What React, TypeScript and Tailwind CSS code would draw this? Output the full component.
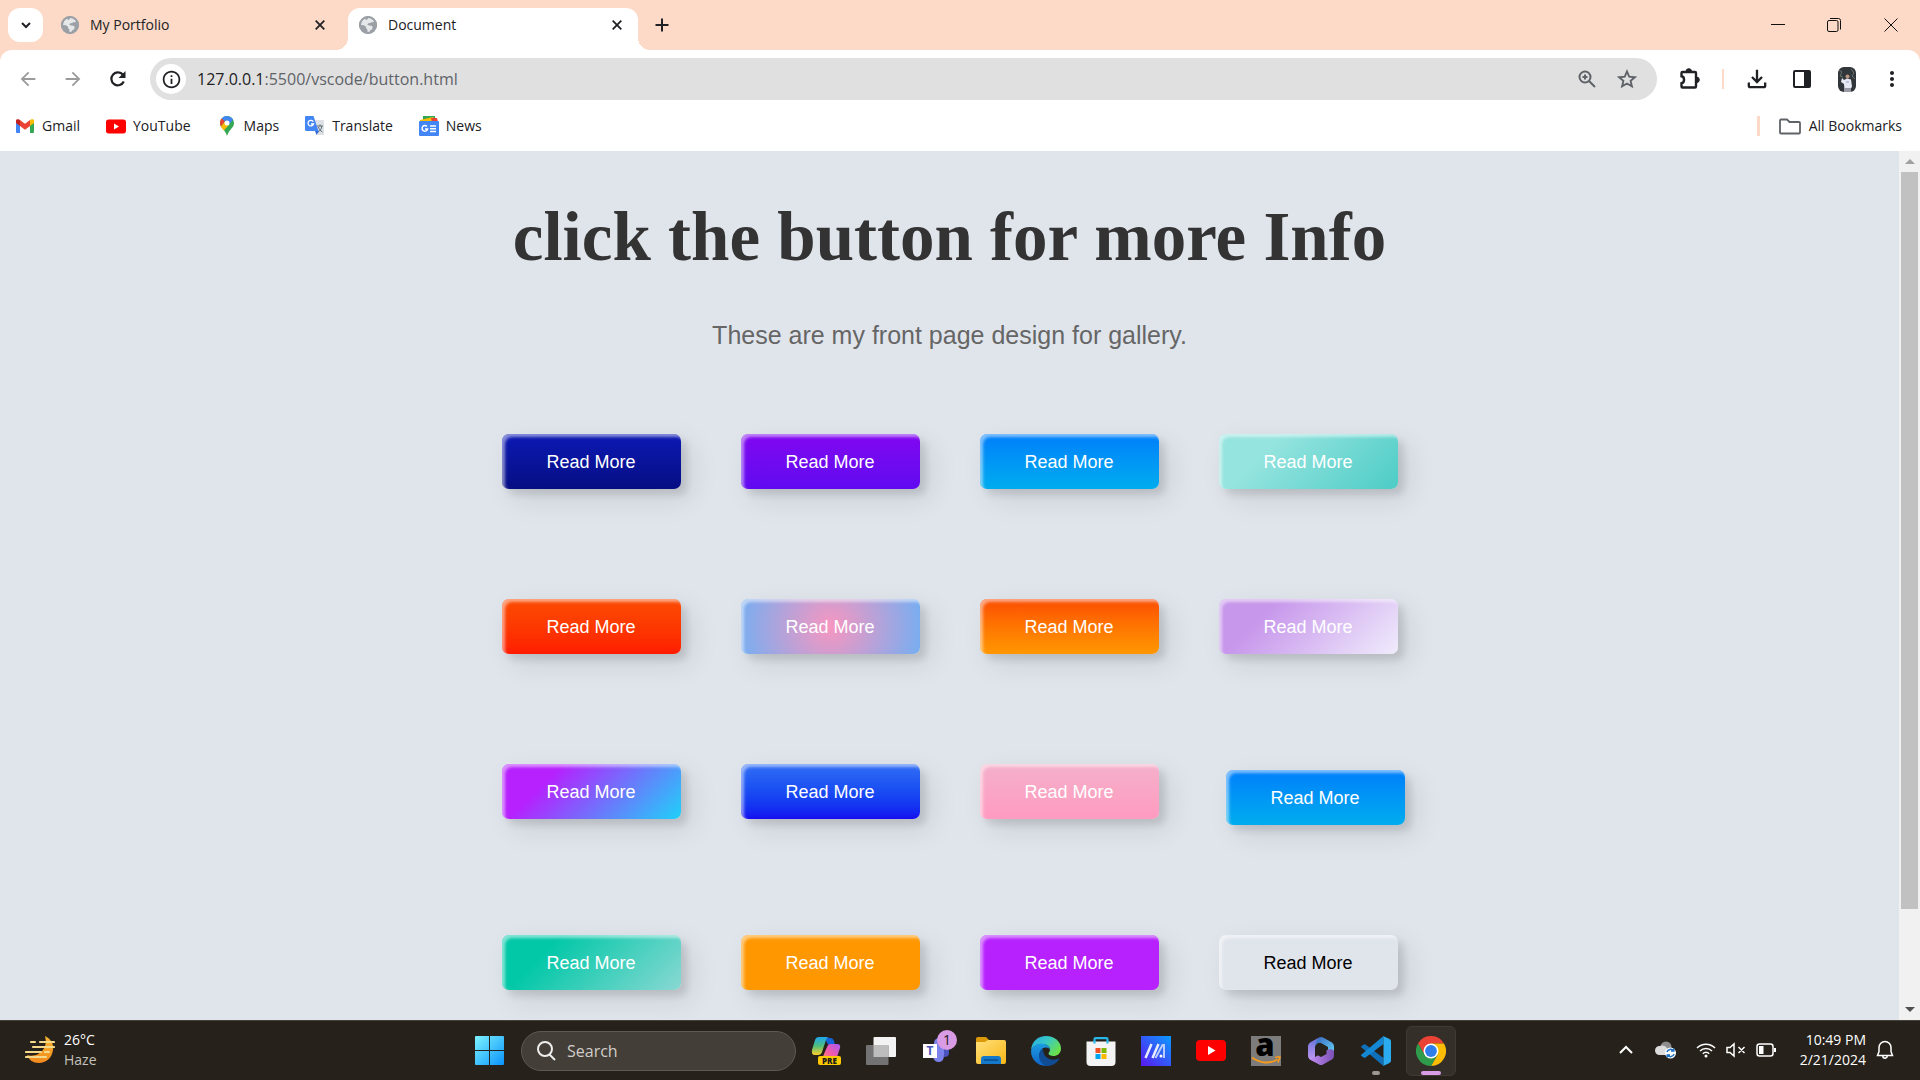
import type { ReactNode } from "react";
import {
  MdArrowBack,
  MdArrowForward,
  MdInfoOutline,
  MdOutlineFileDownload,
  MdMoreVert,
} from "react-icons/md";

/* ---------- browser icons ---------- */

function Globe() {
  return (
    <svg viewBox="0 0 18 18" className="size-[18px] shrink-0" aria-hidden="true">
      <circle cx="9" cy="9" r="9" fill="#9aa0a6" />
      <path d="M9.2 1.8c2.4-.3 5 1.2 6.1 3.4l-1.8 1.3-1.2-.6-.9 1.2-2.2.2-.9 1.5 1.9.8 2.4.1 1.1 1.4-.6 2.1-2.1 1.2-.5 1.7-1.9.4-.3-3-1.3-1.4-.1-1.5-2-1.4-3.1-.3C1.9 5.6 3.9 3.1 6.3 2.3l.5 1.6 1.6-.5z" fill="#fff" opacity=".75" />
      <circle cx="9" cy="9" r="8" fill="none" stroke="#9aa0a6" strokeWidth="2" />
    </svg>
  );
}

function Chevron({ up = false, className = "" }: { up?: boolean; className?: string }) {
  return (
    <svg viewBox="0 0 14 14" className={className} fill="none" stroke="currentColor" strokeWidth="2" aria-hidden="true">
      <path d={up ? "M1 10l6-6 6 6" : "M3 5l4 4 4-4"} />
    </svg>
  );
}

function Reload() {
  return (
    <svg viewBox="0 0 20 20" className="size-5" aria-hidden="true">
      <path d="M15.800 12.500A6.500 6.500 0 1 1 15 5.800" fill="none" stroke="#202124" strokeWidth="2.200" />
      <path d="M17.500 2v7h-7z" fill="#202124" />
    </svg>
  );
}

function Magnifier() {
  return (
    <svg viewBox="0 0 20 20" className="size-5" fill="none" stroke="#5f6368" strokeWidth="2" aria-hidden="true">
      <circle cx="8" cy="8" r="5.500" />
      <path d="M12 12l6 6M8 5.500v5M5.500 8h5" />
    </svg>
  );
}

function Star() {
  return (
    <svg viewBox="0 0 20 20" className="size-5" fill="none" stroke="#5f6368" strokeWidth="1.900" aria-hidden="true">
      <path d="M10 2.500l2.200 5.200 5.700.5-4.300 3.700 1.300 5.500-4.900-2.900-4.900 2.900 1.300-5.500L2.100 8.200l5.700-.5z" />
    </svg>
  );
}

function Puzzle() {
  return (
    <svg viewBox="0 0 24 24" className="size-6" aria-hidden="true">
      <path d="M4.500 5H17a1 1 0 0 1 1 1v13.500a1 1 0 0 1-1 1H4.500a1 1 0 0 1-1-1v-3.300c3.400-.4 3.400-6.500 0-6.900V6a1 1 0 0 1 1-1z" fill="none" stroke="#202124" strokeWidth="2.400" />
      <path d="M8 4.500a2.800 2.800 0 0 1 5.600 0zM18.500 10a2.800 2.800 0 0 1 0 5.600z" fill="#202124" stroke="#202124" />
    </svg>
  );
}

function SidePanel() {
  return (
    <svg viewBox="0 0 20 20" className="size-5" aria-hidden="true">
      <rect x="2" y="2" width="16" height="16" rx="1" fill="none" stroke="#202124" strokeWidth="2" />
      <path d="M12 2h6v16h-6z" fill="#202124" />
    </svg>
  );
}

function Avatar() {
  return (
    <svg viewBox="0 0 18 25" className="h-[25px] w-[18px]" aria-hidden="true">
      <rect width="18" height="25" rx="6" fill="#30363a" />
      <path d="M1 3l3 2-2 4 3 1M13 2l3 4-2 3 3 3" stroke="#68746f" fill="none" />
      <circle cx="9.500" cy="9.500" r="2" fill="#b99580" />
      <path d="M4 11l2 2 3-1.500 4 1 1 7-1.500 3H6.500L6 17l-3-2z" fill="#e6e8f2" />
      <path d="M8 15h3" stroke="#8da2cf" />
      <path d="M6 21h7v4H6z" fill="#9a9aa6" />
    </svg>
  );
}

function Folder() {
  return (
    <svg viewBox="0 0 22 17" className="h-[17px] w-[22px]" fill="none" stroke="#5f6368" strokeWidth="1.800" aria-hidden="true">
      <path d="M2 1.500h6L10.500 4H20a1 1 0 0 1 1 1v9.500a1 1 0 0 1-1 1H2a1 1 0 0 1-1-1v-12a1 1 0 0 1 1-1z" />
    </svg>
  );
}

function Gmail() {
  return (
    <svg viewBox="0 0 18 14" className="h-[14px] w-[18px]" aria-hidden="true">
      <path d="M0 1.500V13q0 1 1 1h3V6z" fill="#4285f4" />
      <path d="M18 1.500V13q0 1-1 1h-3V6z" fill="#34a853" />
      <path d="M14 1v6l4-3V1.800C18 0 16 0 15 .5z" fill="#fbbc04" />
      <path d="M4 1v6l5 3.800L14 7V1L9 4.800z" fill="#ea4335" />
      <path d="M0 4l4 3V1L3 .5C2 0 0 0 0 1.800z" fill="#c5221f" />
    </svg>
  );
}

function YouTube({ className }: { className: string }) {
  return (
    <svg viewBox="0 0 30 21" className={className} aria-hidden="true">
      <rect width="30" height="21" rx="4" fill="#f00" />
      <path d="M12 6l7.500 4.500L12 15z" fill="#fff" />
    </svg>
  );
}

function MapPin() {
  return (
    <svg viewBox="0 0 14 20" className="h-5 w-[14px]" aria-hidden="true">
      <path d="M7 0a7 7 0 0 1 7 7c0 5-5 6-7 13C5 13 0 12 0 7a7 7 0 0 1 7-7z" fill="#34a853" />
      <path d="M1.700 2.500A7 7 0 0 1 9.100.4L4.800 5.500z" fill="#4285f4" />
      <path d="M1.700 2.500l3.300 3L.9 10.500C-.4 8-.4 5 1.700 2.500z" fill="#ea4335" />
      <path d="M9.100.4a7 7 0 0 1 4 3.200L8.700 9 5 5.500z" fill="#4285f4" />
      <path d="M.9 10.500L5 5.500 9 8.700 4 14.600C2.800 13 1.500 12 .9 10.500z" fill="#fbbc04" />
      <circle cx="7" cy="7" r="2.500" fill="#fff" />
    </svg>
  );
}

function Translate() {
  return (
    <svg viewBox="0 0 20 20" className="size-5" aria-hidden="true">
      <path d="M8 4h10q1 0 1 1v13q0 1-1 1h-6z" fill="#dde1e6" />
      <path d="M12 10h6M15 8.500V10M13 16c2-1 3.500-3 3.800-6M13.500 11c.5 2 2 4 4 5" stroke="#5f6b75" fill="none" />
      <path d="M10 15h4l-2.500 4z" fill="#3367d6" />
      <path d="M1 0h7.500l5 15h-12Q0 15 0 13.500V1q0-1 1-1z" fill="#4285f4" />
      <path d="M8.300 5.800A2.800 2.800 0 1 0 8.500 8H6" stroke="#fff" strokeWidth="1.300" fill="none" />
    </svg>
  );
}

function News() {
  return (
    <svg viewBox="0 0 20 20" className="size-5" aria-hidden="true">
      <path d="M4 0h12v4H4z" fill="#34a853" />
      <path d="M1 4l13-3 2 4H1z" fill="#fbbc04" />
      <path d="M12 2h6l1 4h-6z" fill="#ea4335" />
      <rect y="5" width="20" height="15" rx="1" fill="#4285f4" />
      <path d="M8 10.500a2.800 2.800 0 1 0 .6 2.500H6M11 10h6M11 12.800h6M11 15.600h6" stroke="#fff" strokeWidth="1.500" fill="none" />
    </svg>
  );
}

/* ---------- taskbar icons ---------- */

function Windows() {
  return (
    <svg viewBox="0 0 29 29" className="size-[29px]" aria-hidden="true">
      <defs>
        <linearGradient id="win" x1="0" y1="0" x2="1" y2="1">
          <stop stopColor="#7df3ff" />
          <stop offset="1" stopColor="#0a93fb" />
        </linearGradient>
      </defs>
      <path d="M0 1q0-1 1-1h13v14H0zM15 0h13q1 0 1 1v13H15zM0 15h14v14H1q-1 0-1-1zM15 15h14v13q0 1-1 1H15z" fill="url(#win)" />
    </svg>
  );
}

function Copilot() {
  return (
    <svg viewBox="0 0 30 30" className="size-[30px] overflow-visible" aria-hidden="true">
      <defs>
        <linearGradient id="cpA" x1="0" y1="0" x2="0" y2="1">
          <stop stopColor="#1ea7f0" />
          <stop offset=".5" stopColor="#4fbf7a" />
          <stop offset="1" stopColor="#ffd02a" />
        </linearGradient>
        <linearGradient id="cpB" x1="1" y1="0" x2="0" y2="1">
          <stop stopColor="#a55af5" />
          <stop offset=".5" stopColor="#f45aa8" />
          <stop offset="1" stopColor="#ff9a4a" />
        </linearGradient>
      </defs>
      <path d="M14 2h6q2 0 3 3l1 4h-5q-2 0-3-2z" fill="#1463d8" />
      <path d="M8 1h10q-2 0-3 3l-4 12q-1 3-4 3H4q-4 0-3-5L4 4q1-3 4-3z" fill="url(#cpA)" />
      <path d="M19 8h7q4 0 3 4l-3 9q-1 4-5 4h-9q-4 0-4-4 4 1 5-3l3-7q1-3 3-3z" fill="url(#cpB)" />
      <rect x="7" y="20" width="23" height="9" rx="2" fill="#ffc900" />
      <text x="18.500" y="27.500" textAnchor="middle" fontFamily="Open Sans, sans-serif" fontWeight="800" fontSize="8" fill="#1b1b1b">PRE</text>
    </svg>
  );
}

function TaskView() {
  return (
    <svg viewBox="0 0 30 28" className="h-7 w-[30px]" aria-hidden="true">
      <rect x="7.500" width="22.500" height="20" rx="1" fill="#f3f3f3" />
      <rect y="8" width="22.500" height="20" rx="1" fill="#737373" />
      <path d="M7.500 8h15v12h-15z" fill="#bdbdbd" />
    </svg>
  );
}

function Teams() {
  return (
    <svg viewBox="0 0 34 34" className="size-[34px] overflow-visible" aria-hidden="true">
      <circle cx="16" cy="13" r="5" fill="#7b83eb" />
      <path d="M18 16h8v7q0 4-5 4z" fill="#4b53bc" />
      <path d="M10 16h11v9q0 7-5 7t-6-5z" fill="#7b83eb" />
      <rect y="14" width="14" height="14" fill="#fff" />
      <text x="7" y="25" textAnchor="middle" fontFamily="Open Sans, sans-serif" fontWeight="700" fontSize="12" fill="#4b53bc">T</text>
      <circle cx="24" cy="10" r="10" fill="#d99be3" />
      <text x="24" y="15" textAnchor="middle" fontFamily="Open Sans, sans-serif" fontSize="14" fill="#1b1b1b">1</text>
    </svg>
  );
}

function Explorer() {
  return (
    <svg viewBox="0 0 30 27" className="h-[27px] w-[30px]" aria-hidden="true">
      <defs>
        <linearGradient id="fold" x1="0" y1="0" x2="1" y2="1">
          <stop stopColor="#ffe07a" />
          <stop offset="1" stopColor="#f9b717" />
        </linearGradient>
      </defs>
      <path d="M0 2q0-2 2-2h8l3 3v6H0z" fill="#dc9a0a" />
      <path d="M0 5h9l3-2h16q2 0 2 2v20q0 2-2 2H2q-2 0-2-2z" fill="url(#fold)" />
      <path d="M5 27v-5q0-3 3-3h14q3 0 3 3v5z" fill="#1578c8" />
      <path d="M8 23h14" stroke="#0a4f94" strokeWidth="1.500" />
    </svg>
  );
}

function Edge() {
  return (
    <svg viewBox="0 0 30 30" className="size-[30px]" aria-hidden="true">
      <defs>
        <linearGradient id="edA" x1="0" y1="0" x2="1" y2=".6">
          <stop stopColor="#27a8e8" />
          <stop offset=".5" stopColor="#38c8c6" />
          <stop offset="1" stopColor="#6be04a" />
        </linearGradient>
        <linearGradient id="edB" x1="0" y1="0" x2="0" y2="1">
          <stop stopColor="#1b9de2" />
          <stop offset="1" stopColor="#1263c6" />
        </linearGradient>
      </defs>
      <path d="M0 14C1 5 7 0 15 0c9 0 15 6 15 12.500 0 5-4 7.500-7.500 7.500-3 0-5-1-5-2.500 0-1 1.500-1.500 1.500-4C19 10 15 8 11 8 6 8 2 10.500 0 14z" fill="url(#edA)" />
      <path d="M0 15C1 10.500 5 7.500 10 7.500c5 0 9 3 9 6-1-1.500-3-2-4.500-2-3 0-6 3.500-6 8 0 5 4 9 9 10C8 31.500 0 24 0 15z" fill="url(#edB)" />
      <path d="M12 13c-3 1.500-4 4-4 7 0 5 4 9.500 9 10 5-.3 8.500-3 11-6.500.4-.7 0-1.200-.8-.8C20 25.500 12 22 12 13z" fill="#0f4c94" />
    </svg>
  );
}

function Store() {
  return (
    <svg viewBox="0 0 30 30" className="size-[30px]" aria-hidden="true">
      <path d="M8.500 8V3.200q0-1 1-1h11q1 0 1 1V8" fill="none" stroke="#29b6e8" strokeWidth="2.200" />
      <path d="M.5 5.500h29V26q0 4-4 4h-21q-4 0-4-4z" fill="#f4f4f4" />
      <path d="M8.500 5v2.500M21.500 5v2.500" stroke="#29b6e8" strokeWidth="2.200" />
      <path d="M9.500 12h5v5h-5z" fill="#f25022" />
      <path d="M15.500 12h5v5h-5z" fill="#7fba00" />
      <path d="M9.500 18h5v5h-5z" fill="#00a4ef" />
      <path d="M15.500 18h5v5h-5z" fill="#ffb900" />
    </svg>
  );
}

function MyAsus() {
  return (
    <svg viewBox="0 0 30 30" className="size-[30px]" aria-hidden="true">
      <defs>
        <linearGradient id="asus" x1="0" y1="1" x2="1" y2="0">
          <stop stopColor="#5a17f0" />
          <stop offset="1" stopColor="#0b9bff" />
        </linearGradient>
      </defs>
      <path d="M0 0h30v30H0z" fill="url(#asus)" />
      <path d="M10.500 8L4.500 22M17.500 8l-6 14" stroke="#e7ecff" strokeWidth="2.500" />
      <path d="M14.500 22l7-13H23v13" fill="none" stroke="#b8ccff" strokeWidth="2" />
      <circle cx="20" cy="20" r="1.500" fill="#fff" />
    </svg>
  );
}

function Amazon() {
  return (
    <svg viewBox="0 0 30 30" className="size-[30px] overflow-visible" aria-hidden="true">
      <path d="M0 0h30v30H0z" fill="#7c7c7c" />
      <text x="14" y="20" textAnchor="middle" fontFamily="Open Sans, sans-serif" fontWeight="800" fontSize="31" fill="#000">a</text>
      <path d="M1 21.500c8 6 18 6.500 25.500 2" fill="none" stroke="#f79a1c" strokeWidth="2" />
      <path d="M24 21.500q6-1.500 5 0t-2 5" fill="none" stroke="#f79a1c" strokeWidth="1.500" />
    </svg>
  );
}

function M365() {
  return (
    <svg viewBox="0 0 30 30" className="size-[30px]" aria-hidden="true">
      <defs>
        <linearGradient id="mA" x1="0" y1="0" x2="0" y2="1">
          <stop stopColor="#6a74dc" />
          <stop offset="1" stopColor="#c79af0" />
        </linearGradient>
        <linearGradient id="mB" x1="0" y1="0" x2="1" y2="1">
          <stop stopColor="#3b62c0" />
          <stop offset="1" stopColor="#63d6f4" />
        </linearGradient>
        <linearGradient id="mC" x1="0" y1="0" x2="1" y2="0">
          <stop stopColor="#c490f2" />
          <stop offset="1" stopColor="#7a4fb4" />
        </linearGradient>
      </defs>
      <path d="M13 1.500L4 6.500Q2 8 2 10v10q0 2 2 3.500L9 26v-5V10z" fill="url(#mA)" />
      <path d="M13 1.500q2-1 4 0l9 5q2 1.500 2 3.500v8l-6-2v-5L15 7q-4-1-6 4 0-6 4-9.500z" fill="url(#mB)" />
      <path d="M3 22q3 1.500 6-1l13-7.500q5-1 6 1.500v5q0 2-2 3.500l-9 5q-2 1-4 0L4 23.500z" fill="url(#mC)" />
      <path d="M15 9l5.500 3v6L15 21l-5.500-3v-6z" fill="#26221b" />
    </svg>
  );
}

function VsCode() {
  return (
    <svg viewBox="0 0 30 30" className="size-[30px]" aria-hidden="true">
      <path d="M0 10.500l2.500-2q1-.5 2 0L22.500 22v8L.5 11.500q-.8-.5-.5-1z" fill="#0f6fb8" />
      <path d="M0 19.500l2.500 2q1 .5 2 0L22.500 8V0L.5 18.500q-.8.5-.5 1z" fill="#1488d4" />
      <path d="M22 0l6.500 3q1.500.8 1.500 2.500v19q0 1.700-1.500 2.500L22 30q.5-.5.5-1.500v-27Q22.500.500 22 0z" fill="#2cacf0" />
    </svg>
  );
}

function Chrome() {
  return (
    <svg viewBox="0 0 30 30" className="size-[30px]" aria-hidden="true">
      <path d="M2 7.500a15 15 0 0 1 26 0H15l-6.500 11.300z" fill="#ea4335" />
      <path d="M28 7.500A15 15 0 0 1 15 30l6.500-11.200L15 7.500z" fill="#fbbc04" />
      <path d="M2 7.500A15 15 0 0 0 15 30l6.500-11.200h-13z" fill="#2f9c4c" />
      <circle cx="15" cy="15" r="7.500" fill="#fff" />
      <circle cx="15" cy="15" r="5.900" fill="#2f7de9" />
    </svg>
  );
}

function Haze() {
  return (
    <svg viewBox="0 0 30 28" className="h-7 w-[30px]" aria-hidden="true">
      <defs>
        <linearGradient id="moon" x1="0" y1="0" x2="0" y2="1">
          <stop stopColor="#f7b733" />
          <stop offset="1" stopColor="#f28a1c" />
        </linearGradient>
      </defs>
      <path d="M20 0c6 3 9 8 8 14-1 8-7 13-14 13-6 0-10-3-12-8 9 3 22-4 18-19z" fill="url(#moon)" />
      <path d="M6 6h4M15 6h14M8 11h21M1 16h15M20 16h4M1 21h20" stroke="#f5d98b" strokeWidth="2.200" strokeLinecap="round" />
    </svg>
  );
}

function Cloud() {
  return (
    <svg viewBox="0 0 22 18" className="h-[18px] w-[22px]" aria-hidden="true">
      <circle cx="11" cy="6" r="5.500" fill="#8d8d8d" />
      <path d="M4.500 14a4.500 4.500 0 0 1 0-9 6 6 0 0 1 8 3l5 6z" fill="#dcdcdc" />
      <circle cx="15.500" cy="12" r="5.500" fill="#fff" />
      <path d="M12 11a3.600 3.600 0 0 1 6.500-1M19 13a3.600 3.600 0 0 1-6.500 1M18.800 7.500V10H16M12.200 16.500V14H15" stroke="#1b6fc4" strokeWidth="1.500" fill="none" />
    </svg>
  );
}

function Wifi() {
  return (
    <svg viewBox="0 0 20 16" className="h-4 w-5" fill="none" stroke="#fff" strokeWidth="1.500" aria-hidden="true">
      <path d="M1 6a12.500 12.500 0 0 1 18 0M4 9a8.500 8.500 0 0 1 12 0M6.800 11.700a4.500 4.500 0 0 1 6.400 0" />
      <circle cx="10" cy="14" r="1.500" fill="#fff" stroke="none" />
    </svg>
  );
}

function Muted() {
  return (
    <svg viewBox="0 0 20 16" className="h-4 w-5" fill="none" stroke="#fff" strokeWidth="1.500" aria-hidden="true">
      <path d="M1 5.500v5h3l4 3.500V2L4 5.500zM12.500 5l6 6M18.500 5l-6 6" />
    </svg>
  );
}

function Battery() {
  return (
    <svg viewBox="0 0 20 14" className="h-[14px] w-5" fill="none" stroke="#fff" strokeWidth="1.500" aria-hidden="true">
      <rect x="1" y="1" width="16" height="12" rx="2.500" />
      <path d="M3 3h4.500v8H3z" fill="#fff" stroke="none" />
      <path d="M19 5v4" strokeWidth="2" />
    </svg>
  );
}

function Bell() {
  return (
    <svg viewBox="0 0 18 20" className="h-5 w-[18px]" fill="none" stroke="#fff" strokeWidth="1.500" aria-hidden="true">
      <path d="M9 1.500a6 6 0 0 1 6 6v4l1.500 4h-15l1.500-4v-4a6 6 0 0 1 6-6zM6.800 16a2.200 2.200 0 0 0 4.400 0" />
    </svg>
  );
}

/* ---------- browser chrome ---------- */

function TabClose({ label }: { label: string }) {
  return (
    <button type="button" aria-label={label} className="flex size-5 items-center justify-center">
      <svg viewBox="0 0 10 10" className="size-[10px]" stroke="#202124" strokeWidth="1.800" aria-hidden="true">
        <path d="M.7.7l8.600 8.600M9.300.7L.7 9.300" />
      </svg>
    </button>
  );
}

function TabStrip() {
  return (
    <header className="flex h-[50px] shrink-0 items-end bg-[#fddac8]">
      <button type="button" aria-label="Search tabs" className="mb-2 ml-2 flex h-[34px] w-[35px] items-center justify-center rounded-xl bg-white">
        <Chevron className="size-[14px] text-[#202124]" />
      </button>
      <div className="flex h-[42px] w-[305px] items-center px-[18px] pb-2">
        <Globe />
        <span className="ml-[11px] flex-1 text-sm text-[#202124]">My Portfolio</span>
        <TabClose label="Close My Portfolio" />
      </div>
      <div className="relative flex h-[42px] w-[290px] items-center rounded-t-[12px] bg-white px-[11px] pb-2 before:absolute before:-left-3 before:bottom-0 before:size-3 before:bg-[radial-gradient(circle_at_0_0,transparent_12px,white_12px)] after:absolute after:-right-3 after:bottom-0 after:size-3 after:bg-[radial-gradient(circle_at_100%_0,transparent_12px,white_12px)]">
        <Globe />
        <span className="ml-[11px] flex-1 text-sm text-[#202124]">Document</span>
        <TabClose label="Close Document" />
      </div>
      <button type="button" aria-label="New tab" className="mb-2 ml-[14px] flex h-[34px] w-5 items-center justify-center">
        <svg viewBox="0 0 14 14" className="size-[14px]" stroke="#202124" strokeWidth="2" aria-hidden="true">
          <path d="M7 .5v13M.5 7h13" />
        </svg>
      </button>
      <div className="ml-auto flex h-full items-center">
        <button type="button" aria-label="Minimize" className="flex h-full w-14 items-center justify-center">
          <svg viewBox="0 0 14 14" className="size-[14px]" stroke="#111" aria-hidden="true"><path d="M0 6.500h14" /></svg>
        </button>
        <button type="button" aria-label="Restore" className="flex h-full w-14 items-center justify-center">
          <svg viewBox="0 0 14 14" className="size-[14px]" stroke="#111" fill="none" aria-hidden="true">
            <rect x=".5" y="2.500" width="10.500" height="11" rx="1.500" />
            <path d="M3 .5h8.500q2 0 2 2v9" />
          </svg>
        </button>
        <button type="button" aria-label="Close" className="flex h-full w-[58px] items-center justify-center">
          <svg viewBox="0 0 14 14" className="size-[14px]" stroke="#111" aria-hidden="true"><path d="M.5.5l13 13M13.500.5l-13 13" /></svg>
        </button>
      </div>
    </header>
  );
}

function ToolButton({ label, children }: { label: string; children: ReactNode }) {
  return (
    <button type="button" aria-label={label} className="flex h-10 w-[45px] shrink-0 items-center justify-center text-[#202124]">
      {children}
    </button>
  );
}

function Toolbar() {
  return (
    <div className="bg-[#fddac8]">
      <div className="flex h-[58px] items-center rounded-t-[12px] bg-white pr-[6px] pl-[5px]">
        <ToolButton label="Back"><MdArrowBack className="size-[22px] text-[#9b9b9b]" /></ToolButton>
        <ToolButton label="Forward"><MdArrowForward className="size-[22px] text-[#9b9b9b]" /></ToolButton>
        <ToolButton label="Reload"><Reload /></ToolButton>
        <div className="mx-[10px] flex h-[42px] flex-1 items-center rounded-full bg-[#e0e0e0] pr-3 pl-[6px]">
          <button type="button" aria-label="Site information" className="flex size-[30px] items-center justify-center rounded-full bg-white text-[#202124]">
            <MdInfoOutline className="size-[21px]" />
          </button>
          <a href="#page" className="ml-[11px] flex-1 text-base text-[#5f6368]">
            <span className="text-[#202124]">127.0.0.1</span>:5500/vscode/button.html
          </a>
          <button type="button" aria-label="Zoom" className="mr-5"><Magnifier /></button>
          <button type="button" aria-label="Bookmark this page" className="mr-2"><Star /></button>
        </div>
        <ToolButton label="Extensions"><Puzzle /></ToolButton>
        <span className="mx-[10px] h-5 w-[2px] bg-[#fddac8]" />
        <ToolButton label="Downloads"><MdOutlineFileDownload className="size-7" /></ToolButton>
        <ToolButton label="Side panel"><SidePanel /></ToolButton>
        <ToolButton label="Profile"><Avatar /></ToolButton>
        <ToolButton label="Menu"><MdMoreVert className="size-6" /></ToolButton>
      </div>
    </div>
  );
}

const bookmarks = [
  { name: "Gmail", icon: <Gmail /> },
  { name: "YouTube", icon: <YouTube className="h-[15px] w-5" /> },
  { name: "Maps", icon: <MapPin /> },
  { name: "Translate", icon: <Translate /> },
  { name: "News", icon: <News /> },
];

function Bookmarks() {
  return (
    <nav className="flex h-[43px] shrink-0 items-start bg-white pt-[7px] pr-[18px] pl-[15px] text-sm leading-[22px] text-[#202124]">
      <div className="flex gap-[26px]">
        {bookmarks.map((b) => (
          <a key={b.name} href="#page" className="flex items-center gap-[7px]">
            <span className="flex w-5 justify-center">{b.icon}</span>
            {b.name}
          </a>
        ))}
      </div>
      <div className="ml-auto flex items-center">
        <span className="h-5 w-[3px] bg-[#fddac8]" />
        <a href="#page" className="ml-[19px] flex items-center gap-2">
          <Folder />
          All Bookmarks
        </a>
      </div>
    </nav>
  );
}

/* ---------- page ---------- */

const buttons = [
  "bg-linear-to-t from-[#060e83] to-[#0c19b4] text-white",
  "bg-linear-to-t from-[#6009f0] to-[#8105f0] text-white",
  "bg-linear-to-t from-[#00acee] to-[#027efb] text-white",
  "bg-[linear-gradient(315deg,#4dccc6_0%,#96e4df_74%)] text-white",
  "bg-linear-to-t from-[#ff1b00] to-[#fb4b02] text-white",
  "bg-[radial-gradient(circle,#f796c0_0%,#76aef1_100%)] text-white",
  "bg-linear-to-t from-[#ff9700] to-[#fb4b02] text-white",
  "bg-[linear-gradient(315deg,#f0ecfc_0%,#c797eb_74%)] text-white",
  "bg-[linear-gradient(315deg,#1fd1f9_0%,#b621fe_74%)] text-white",
  "bg-linear-to-t from-[#1609f0] to-[#316ef4] text-white",
  "bg-linear-to-t from-[#ff9bc0] to-[#f4b0ca] text-white",
  "mt-[6px] ml-[7px] bg-linear-to-t from-[#00acee] to-[#027efb] text-white",
  "bg-[linear-gradient(315deg,#89d8d3_0%,#03c8a8_74%)] text-white",
  "bg-[#ff9700] text-white",
  "bg-[#b621fe] text-white",
  "bg-[#e0e5ec] text-black",
];

function Page() {
  return (
    <div className="flex min-h-0 flex-1 bg-[#e0e5ec]">
      <main id="page" className="flex min-w-0 flex-1 flex-col items-center overflow-hidden pt-[46px]">
        <h1 className="font-['Liberation_Serif',serif] text-[69px] leading-[80px] font-bold text-[#333]">click the button for more Info</h1>
        <p className="mt-[43px] font-['Liberation_Sans',sans-serif] text-[25px] leading-[30px] text-[#666]">These are my front page design for gallery.</p>
        <div className="mt-[84px] grid grid-cols-[repeat(4,179px)] gap-x-[60px] gap-y-[110px]">
          {buttons.map((look, i) => (
            <button
              key={i}
              type="button"
              className={`h-[55px] w-[179px] rounded-[7px] font-['Liberation_Sans',sans-serif] text-lg shadow-[inset_3px_3px_3px_0_rgba(255,255,255,0.5),10px_10px_28px_0_rgba(0,0,0,0.1),6px_6px_7px_0_rgba(0,0,0,0.1)] ${look}`}
            >
              Read More
            </button>
          ))}
        </div>
      </main>
      <div className="flex w-[21px] shrink-0 flex-col items-center bg-[#f1f1f1]" aria-hidden="true">
        <span className="flex h-[21px] items-center"><span className="border-x-[5px] border-b-[5px] border-x-transparent border-b-[#a0a0a0]" /></span>
        <span className="w-[17px] flex-[737] bg-[#c1c1c1]" />
        <span className="flex-[90]" />
        <span className="flex h-[21px] items-center"><span className="border-x-[5px] border-t-[5px] border-x-transparent border-t-[#505050]" /></span>
      </div>
    </div>
  );
}

/* ---------- taskbar ---------- */

const apps = [
  { name: "Copilot", icon: <Copilot /> },
  { name: "Task view", icon: <TaskView /> },
  { name: "Teams", icon: <Teams />, look: "pb-2 pl-2" },
  { name: "File Explorer", icon: <Explorer /> },
  { name: "Edge", icon: <Edge /> },
  { name: "Microsoft Store", icon: <Store /> },
  { name: "MyASUS", icon: <MyAsus /> },
  { name: "YouTube", icon: <YouTube className="h-[21px] w-[30px]" /> },
  { name: "Amazon", icon: <Amazon /> },
  { name: "Microsoft 365", icon: <M365 /> },
  {
    name: "Visual Studio Code",
    icon: <VsCode />,
    look: "relative after:absolute after:bottom-px after:h-1 after:w-2 after:rounded-full after:bg-[#9b9793]",
  },
  {
    name: "Chrome",
    icon: <Chrome />,
    look: "relative rounded-md border border-[#413a34] bg-[#352f29] after:absolute after:bottom-0 after:h-1 after:w-5 after:rounded-full after:bg-[#d99be3]",
  },
];

function Taskbar() {
  return (
    <footer className="grid h-[60px] shrink-0 grid-cols-[1fr_auto_1fr] items-center border-t border-[#45413b] bg-[#26211a] text-white">
      <button type="button" className="flex items-center gap-[9px] pb-[2px] pl-[25px] text-left text-sm leading-5">
        <Haze />
        <span>
          26°C
          <span className="block text-[#c4c1bd]">Haze</span>
        </span>
      </button>
      <div className="flex items-center">
        <button type="button" aria-label="Start" className="flex size-[50px] items-center justify-center"><Windows /></button>
        <label className="mr-[5px] ml-[7px] flex h-10 w-[275px] items-center rounded-full border border-[#5e5954] bg-[#433e38] pl-[14px]">
          <svg viewBox="0 0 20 20" className="size-5 shrink-0" fill="none" stroke="#eee" strokeWidth="2" aria-hidden="true">
            <circle cx="9" cy="8" r="7" />
            <path d="M13.500 13.500L19 19" />
          </svg>
          <input type="text" aria-label="Search" placeholder="Search" className="ml-[11px] w-full bg-transparent text-base outline-none placeholder:text-[#d0cdca]" />
        </label>
        <div className="flex gap-[5px]">
          {apps.map((app) => (
            <button key={app.name} type="button" aria-label={app.name} className={`flex size-[50px] items-center justify-center ${app.look ?? ""}`}>
              {app.icon}
            </button>
          ))}
        </div>
      </div>
      <div className="flex items-center justify-end pr-[26px] pb-[2px]">
        <button type="button" aria-label="Show hidden icons" className="mr-[22px]"><Chevron up className="size-[14px]" /></button>
        <button type="button" aria-label="OneDrive" className="mr-[19px]"><Cloud /></button>
        <button type="button" aria-label="Network, sound and battery" className="mr-[24px] flex items-center gap-[10px]">
          <Wifi />
          <Muted />
          <Battery />
        </button>
        <button type="button" className="mr-[10px] text-right text-sm leading-5">
          10:49 PM
          <span className="block">2/21/2024</span>
        </button>
        <button type="button" aria-label="Notifications"><Bell /></button>
      </div>
    </footer>
  );
}

export default function App() {
  return (
    <div className="flex h-screen flex-col overflow-hidden font-['Open_Sans','Noto_Sans',sans-serif]">
      <TabStrip />
      <Toolbar />
      <Bookmarks />
      <Page />
      <Taskbar />
    </div>
  );
}
